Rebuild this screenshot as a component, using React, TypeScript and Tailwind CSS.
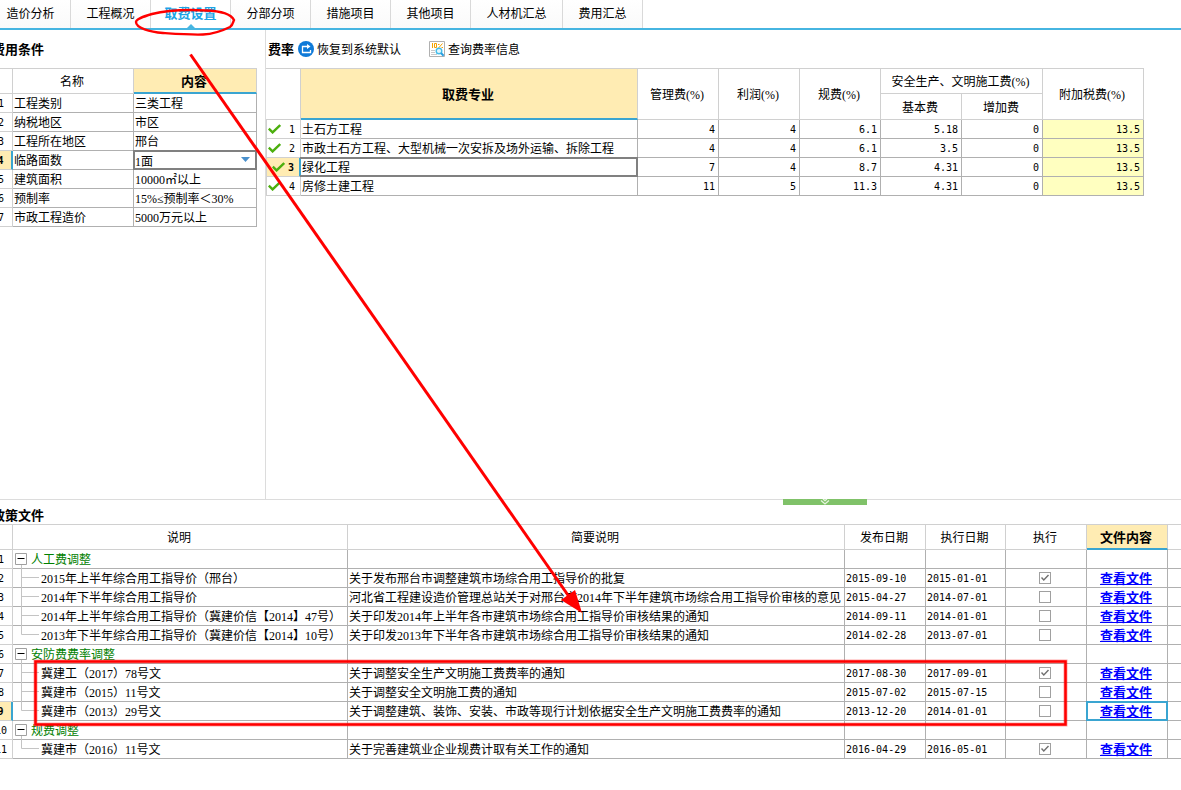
import type { ReactNode } from "react";
import clsx from "clsx";

const TABS = ["造价分析", "工程概况", "取费设置", "分部分项", "措施项目", "其他项目", "人材机汇总", "费用汇总"];
const ACTIVE_TAB = "取费设置";

const CONDITIONS = [
  { name: "工程类别", value: "三类工程" },
  { name: "纳税地区", value: "市区" },
  { name: "工程所在地区", value: "邢台" },
  { name: "临路面数", value: "1面", editing: true },
  { name: "建筑面积", value: "10000㎡以上" },
  { name: "预制率", value: "15%≤预制率＜30%" },
  { name: "市政工程造价", value: "5000万元以上" },
];

const RATES = [
  { name: "土石方工程", values: ["4", "4", "6.1", "5.18", "0"], tax: "13.5" },
  { name: "市政土石方工程、大型机械一次安拆及场外运输、拆除工程", values: ["4", "4", "6.1", "3.5", "0"], tax: "13.5" },
  { name: "绿化工程", values: ["7", "4", "8.7", "4.31", "0"], tax: "13.5", selected: true },
  { name: "房修土建工程", values: ["11", "5", "11.3", "4.31", "0"], tax: "13.5" },
];

interface Policy {
  title: string;
  group?: boolean;
  last?: boolean;
  summary?: string;
  published?: string;
  effective?: string;
  applied?: boolean;
  selected?: boolean;
}

const POLICIES: Policy[] = [
  { title: "人工费调整", group: true },
  { title: "2015年上半年综合用工指导价（邢台）", summary: "关于发布邢台市调整建筑市场综合用工指导价的批复", published: "2015-09-10", effective: "2015-01-01", applied: true },
  { title: "2014年下半年综合用工指导价", summary: "河北省工程建设造价管理总站关于对邢台市2014年下半年建筑市场综合用工指导价审核的意见", published: "2015-04-27", effective: "2014-07-01" },
  { title: "2014年上半年综合用工指导价（冀建价信【2014】47号）", summary: "关于印发2014年上半年各市建筑市场综合用工指导价审核结果的通知", published: "2014-09-11", effective: "2014-01-01" },
  { title: "2013年下半年综合用工指导价（冀建价信【2014】10号）", summary: "关于印发2013年下半年各市建筑市场综合用工指导价审核结果的通知", published: "2014-02-28", effective: "2013-07-01", last: true },
  { title: "安防费费率调整", group: true },
  { title: "冀建工（2017）78号文", summary: "关于调整安全生产文明施工费费率的通知", published: "2017-08-30", effective: "2017-09-01", applied: true },
  { title: "冀建市（2015）11号文", summary: "关于调整安全文明施工费的通知", published: "2015-07-02", effective: "2015-07-15" },
  { title: "冀建市（2013）29号文", summary: "关于调整建筑、装饰、安装、市政等现行计划依据安全生产文明施工费费率的通知", published: "2013-12-20", effective: "2014-01-01", last: true, selected: true },
  { title: "规费调整", group: true },
  { title: "冀建市（2016）11号文", summary: "关于完善建筑业企业规费计取有关工作的通知", published: "2016-04-29", effective: "2016-05-01", applied: true, last: true },
];

export default function App() {
  return (
    <div className="relative flex min-h-screen flex-col overflow-hidden bg-white font-['Liberation_Serif','Noto_Sans_CJK_SC',sans-serif] text-[12px] leading-4 text-black">
      <TabBar />
      <main className="flex flex-1 flex-col">
        <div className="flex flex-1">
          <ConditionPane />
          <RatePane />
        </div>
        <PolicyPane />
      </main>
      <Annotations />
    </div>
  );
}

function TabBar() {
  return (
    <nav className="-ml-[9px] flex h-[30px] border-b-2 border-[#46b5e1]">
      {TABS.map((tab) => (
        <button
          key={tab}
          type="button"
          className={clsx(
            "relative flex h-7 items-center justify-center border-r border-[#d9d9d9]",
            tab.length > 4 ? "w-[92px]" : "w-20",
            tab === ACTIVE_TAB ? "text-[13px] font-bold text-[#1ba4e6]" : "bg-gradient-to-b from-white to-[#fafafa]"
          )}
        >
          {tab}
          {tab === ACTIVE_TAB && (
            <svg className="absolute bottom-0 left-9" width="8" height="4" viewBox="0 0 8 4">
              <path d="M4 0L8 4H0z" fill="#46b5e1" />
            </svg>
          )}
        </button>
      ))}
    </nav>
  );
}

function ConditionPane() {
  return (
    <section className="w-[266px] shrink-0 border-r border-[#dcdcdc]">
      <h2 className="-ml-2 flex h-[38px] items-center pt-0.5 text-[13px] font-bold">费用条件</h2>
      <table className="-ml-[10px] w-[267px] table-fixed border-separate border-spacing-0 border-t border-[#d0d0d0]">
        <colgroup>
          <col className="w-[23px]" />
          <col className="w-[121px]" />
          <col className="w-[123px]" />
        </colgroup>
        <thead>
          <tr className="h-[25px]">
            <HeadCell />
            <HeadCell>名称</HeadCell>
            <HeadCell active>内容</HeadCell>
          </tr>
        </thead>
        <tbody>
          {CONDITIONS.map((row, i) => (
            <tr key={row.name} className="h-[19px]">
              <RowNumber selected={row.editing}>{i + 1}</RowNumber>
              <Cell>{row.name}</Cell>
              <Cell>
                {row.editing ? (
                  <>
                    <select
                      aria-label={row.name}
                      defaultValue={row.value}
                      className="absolute -inset-px appearance-none border-2 border-[#808080] bg-white pt-0.5 leading-4 outline-none"
                    >
                      <option>1面</option>
                      <option>2面</option>
                    </select>
                    <svg className="pointer-events-none absolute top-1.5 right-1.5" width="9" height="5" viewBox="0 0 9 5">
                      <path d="M0 0H9L4.5 5z" fill="#4a90cc" />
                    </svg>
                  </>
                ) : (
                  row.value
                )}
              </Cell>
            </tr>
          ))}
        </tbody>
      </table>
    </section>
  );
}

function RatePane() {
  return (
    <section className="min-w-0 flex-1">
      <div className="flex h-[38px] items-center">
        <h2 className="ml-0.5 w-[30px] pt-0.5 text-[13px] font-bold">费率</h2>
        <button type="button" className="flex items-center gap-[3px]">
          <ResetIcon />
          <span className="pt-0.5">恢复到系统默认</span>
        </button>
        <button type="button" className="ml-7 flex items-center gap-[3px]">
          <RateSearchIcon />
          <span className="pt-0.5">查询费率信息</span>
        </button>
      </div>
      <table className="w-[878px] table-fixed border-separate border-spacing-0 border-t border-[#d0d0d0]">
        <colgroup>
          <col className="w-[35px]" />
          <col className="w-[337px]" />
          <col span={5} className="w-[81px]" />
          <col className="w-[101px]" />
        </colgroup>
        <thead>
          <tr className="h-[25px]">
            <HeadCell rowSpan={2} />
            <HeadCell rowSpan={2} active>取费专业</HeadCell>
            <HeadCell rowSpan={2}>管理费(%)</HeadCell>
            <HeadCell rowSpan={2}>利润(%)</HeadCell>
            <HeadCell rowSpan={2}>规费(%)</HeadCell>
            <HeadCell colSpan={2}>安全生产、文明施工费(%)</HeadCell>
            <HeadCell rowSpan={2}>附加税费(%)</HeadCell>
          </tr>
          <tr className="h-[26px]">
            <HeadCell>基本费</HeadCell>
            <HeadCell>增加费</HeadCell>
          </tr>
        </thead>
        <tbody>
          {RATES.map((row, i) => (
            <tr key={row.name} className="h-[19px]">
              <th
                className={clsx(
                  "border-b border-l border-[#d0d0d0] p-0",
                  row.selected ? "border-r-2 border-r-[#3aa5d1] bg-[#ffecb3] font-bold" : "border-r font-normal"
                )}
              >
                <div className={clsx("flex items-center justify-between pr-[5px]", row.selected ? "pl-[5px]" : "pl-px")}>
                  <svg width="13" height="10" viewBox="0 0 13 10" fill="none" stroke="#4caf0e" strokeWidth="2.4">
                    <path d="M.8 4.6L4.6 8.4L12.2 1" />
                  </svg>
                  <span className="pt-0.5 font-['DejaVu_Sans_Mono',monospace] text-[10px]">{i + 1}</span>
                </div>
              </th>
              <Cell>
                {row.name}
                {row.selected && <span className="absolute -inset-px border-2 border-l-0 border-[#808080]" />}
              </Cell>
              {row.values.map((value, n) => (
                <Cell key={n} numeric>{value}</Cell>
              ))}
              <Cell numeric tinted>{row.tax}</Cell>
            </tr>
          ))}
        </tbody>
      </table>
    </section>
  );
}

function PolicyPane() {
  return (
    <section className="relative h-[291px] border-t border-[#dcdcdc]">
      {/* collapse handle of the splitter */}
      <button
        type="button"
        aria-label="收起"
        className="absolute -top-px left-[783px] flex h-1.5 w-[84px] justify-center bg-[#80c269]"
      >
        <svg width="10" height="6" viewBox="0 0 10 6" fill="none" stroke="#e6f5df" strokeWidth="1.3">
          <path d="M3 0L5 1.6L7 0M1 1.4L5 5L9 1.4" />
        </svg>
      </button>
      <h2 className="-ml-2 h-6 pt-2 text-[13px] font-bold">政策文件</h2>
      <div className="overflow-hidden">
        <table className="-ml-[10px] w-[calc(100%+20px)] min-w-[1201px] table-fixed border-separate border-spacing-0 border-t border-[#d0d0d0]">
          <colgroup>
            <col className="w-[23px]" />
            <col className="w-[335px]" />
            <col className="w-[497px]" />
            <col className="w-[81px]" />
            <col className="w-[80px]" />
            <col className="w-[81px]" />
            <col className="w-[81px]" />
            <col />
          </colgroup>
          <thead>
            <tr className="h-[25px]">
              <HeadCell />
              <HeadCell>说明</HeadCell>
              <HeadCell>简要说明</HeadCell>
              <HeadCell>发布日期</HeadCell>
              <HeadCell>执行日期</HeadCell>
              <HeadCell>执行</HeadCell>
              <HeadCell active>文件内容</HeadCell>
              <HeadCell />
            </tr>
          </thead>
          <tbody>
            {POLICIES.map((row, i) => (
              <PolicyRow key={row.title} row={row} index={i + 1} />
            ))}
          </tbody>
        </table>
      </div>
    </section>
  );
}

function PolicyRow({ row, index }: { row: Policy; index: number }) {
  return (
    <tr className="h-[19px]">
      <RowNumber selected={row.selected}>{index}</RowNumber>
      <Cell>
        {row.group ? (
          <div className="flex items-center gap-1 pl-px text-[#008000]">
            <button type="button" aria-label={"折叠" + row.title} className="size-3 -translate-y-px">
              <svg width="12" height="12" viewBox="0 0 12 12" fill="none">
                <path d="M.5 .5H11.5V11.5H.5z" stroke="#a0a0a0" />
                <path d="M2.5 5.5H9.5" stroke="#000" />
              </svg>
            </button>
            {row.title}
          </div>
        ) : (
          <div className="pl-[27px]">{row.title}</div>
        )}
        <svg className="pointer-events-none absolute top-0 left-0" width="26" height="19" viewBox="0 0 26 19" fill="none" stroke="#c4c4c4">
          {row.group ? <path d="M8.5 15V19" /> : <path d={row.last ? "M8.5 0V8.5H26" : "M8.5 0V19M8.5 8.5H26"} />}
        </svg>
      </Cell>
      <Cell>{row.summary}</Cell>
      <Cell date>{row.published}</Cell>
      <Cell date>{row.effective}</Cell>
      <Cell>
        {!row.group && (
          <label className="relative mx-auto block size-3 -translate-y-px">
            <input
              type="checkbox"
              aria-label={"执行 " + row.title}
              defaultChecked={row.applied}
              className="peer block size-3 appearance-none border border-[#a0a0a0] bg-white"
            />
            <svg className="pointer-events-none absolute inset-0 hidden peer-checked:block" width="12" height="12" viewBox="0 0 12 12" fill="none" stroke="#707070" strokeWidth="1.4">
              <path d="M2.5 5.5L4.8 8L9.5 3" />
            </svg>
          </label>
        )}
      </Cell>
      <Cell>
        {!row.group && (
          <a href="#" className="block text-center text-[13px] font-bold text-[#0000ff] underline">查看文件</a>
        )}
        {row.selected && <span className="pointer-events-none absolute -inset-px border-2 border-[#3aa5d1]" />}
      </Cell>
      <Cell />
    </tr>
  );
}

interface HeadCellProps {
  children?: ReactNode;
  active?: boolean;
  rowSpan?: number;
  colSpan?: number;
}

function HeadCell({ children, active, rowSpan, colSpan }: HeadCellProps) {
  return (
    <th
      rowSpan={rowSpan}
      colSpan={colSpan}
      className={clsx(
        "border-r border-[#d0d0d0] pt-0.5 pr-0.5 pb-0 pl-0",
        active ? "border-b-2 border-b-[#3aa5d1] bg-[#ffecb3] text-[13px] font-bold" : "border-b font-normal"
      )}
    >
      {children}
    </th>
  );
}

function RowNumber({ children, selected }: { children: ReactNode; selected?: boolean }) {
  return (
    <th
      className={clsx(
        "border-b border-[#d0d0d0] px-0 pt-0.5 pb-0 text-center font-['DejaVu_Sans_Mono',monospace] text-[10px]",
        selected ? "border-r-2 border-r-[#3aa5d1] bg-[#ffecb3] font-bold" : "border-r font-normal"
      )}
    >
      {children}
    </th>
  );
}

interface CellProps {
  children?: ReactNode;
  numeric?: boolean;
  date?: boolean;
  tinted?: boolean;
}

function Cell({ children, numeric, date, tinted }: CellProps) {
  return (
    <td
      className={clsx(
        "relative border-r border-b border-[#b0b0b0] pt-0.5 pr-[3px] pb-0 pl-px whitespace-nowrap",
        numeric && "text-right",
        (numeric || date) && "font-['DejaVu_Sans_Mono',monospace] text-[10px]",
        tinted && "bg-[#ffffc0]"
      )}
    >
      {children}
    </td>
  );
}

function ResetIcon() {
  return (
    <svg width="16" height="16" viewBox="0 0 16 16" fill="none">
      <circle cx="8" cy="8" r="8" fill="#0f7ad8" />
      <path d="M9.500 5.500H4.500V11.500H12.500V9" stroke="#fff" strokeWidth="1.3" />
      <path d="M9 3L12.500 5.500L9 8z" fill="#fff" />
    </svg>
  );
}

function RateSearchIcon() {
  return (
    <svg width="16" height="16" viewBox="0 0 16 16" fill="none">
      <path d="M.5 .5H15.5V15.5H.5z" fill="#fff" stroke="#b0b0b0" />
      <path d="M3.5 2V7M5.5 2.5H7.5V6.5H5.5z" stroke="#f5a200" />
      <path d="M9.5 7L13.5 2.5M9 3.5H10.5M12.5 6.5H14" stroke="#f5a200" />
      <path d="M2 9.5H6M2 11.5H6M2 13.5H8" stroke="#c8c8c8" />
      <circle cx="10" cy="10" r="2.8" fill="#e4f6fd" stroke="#45bde9" strokeWidth="1.4" />
      <path d="M12 12L14.6 14.8" stroke="#2b9fe0" strokeWidth="2" />
    </svg>
  );
}

// Red pen marks: ring on the active tab, arrow to the policy table, box round the safety fee notices
function Annotations() {
  return (
    <svg
      className="pointer-events-none absolute top-0 left-0"
      width="1181"
      height="790"
      viewBox="0 0 1181 790"
      fill="none"
      stroke="#ff0000"
    >
      <path
        d="M152 14C142 17 136 19 136 22C136 28 150 32 163 33C178 34 192 35 203 34.5C213 34 224 30 230 27C233 25 233 22 234 20C231 14 220 11 206 10.5C188 9.5 168 10 152 14z"
        strokeWidth="2.4"
      />
      <path d="M190.5 54.5L570 598" strokeWidth="3" />
      <path d="M582 613L561 600L575 590z" fill="#ff0000" stroke="none" />
      <path d="M35.5 661.5H1065.5V724.5H35.5z" strokeWidth="4" strokeOpacity="0.35" />
      <path d="M35.5 661.5H1065.5V724.5H35.5z" strokeWidth="2.5" />
    </svg>
  );
}
